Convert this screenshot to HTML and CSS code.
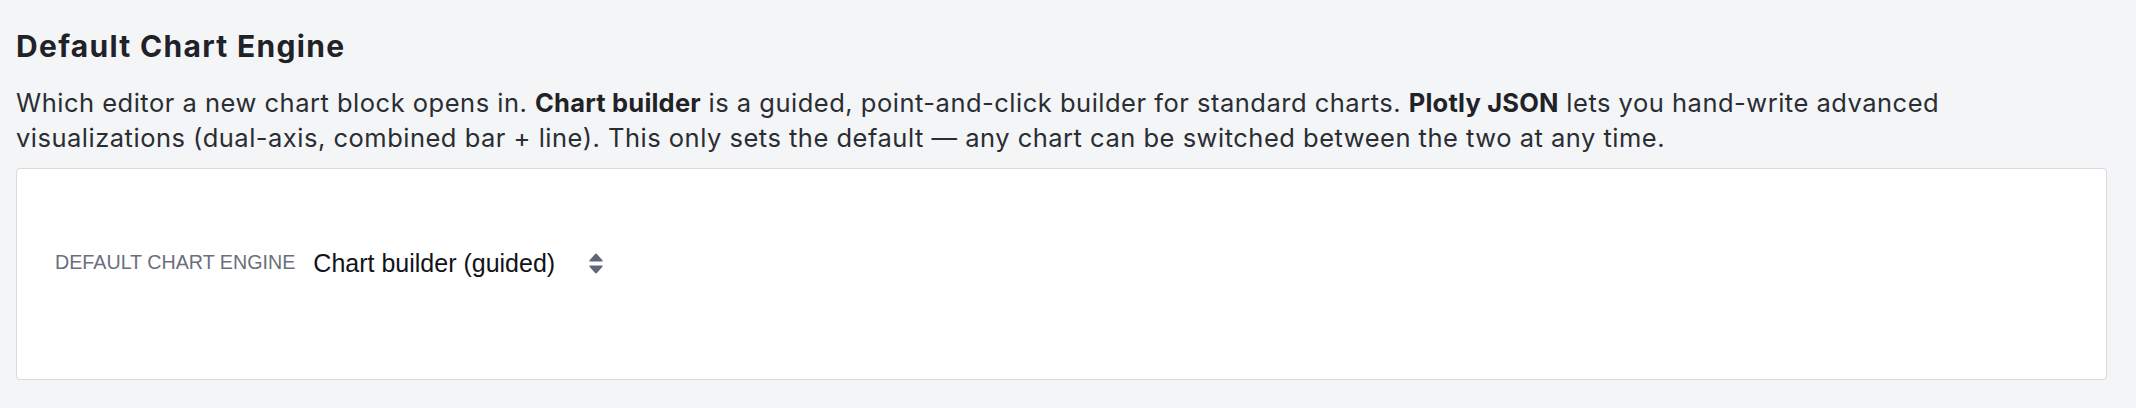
FILE: index.html
```html
<!DOCTYPE html>
<html lang="en">
<head>
<meta charset="utf-8">
<title>Default Chart Engine</title>
<link rel="stylesheet" href="styles.css">
</head>
<body>
<section class="setting">
  <h2 class="setting-title">Default Chart Engine</h2>
  <p class="setting-desc">Which editor a new chart block opens in. <strong>Chart builder</strong> is a guided, point-and-click builder for standard charts. <strong>Plotly JSON</strong> lets you hand-write advanced visualizations (dual-axis, combined bar + line). This only sets the default — any chart can be switched between the two at any time.</p>
  <div class="setting-card">
    <div class="field-row">
      <label class="field-label" for="engine">Default chart engine</label>
      <div class="select-wrap">
        <span class="select-value" id="engine">Chart builder (guided)</span>
        <svg class="select-icon" width="16" height="21" viewBox="0 0 16 21" aria-hidden="true">
          <path d="M6.9 1.2 Q8 0 9.1 1.2 L14.4 7.2 Q15.2 8.6 13.5 8.6 L2.5 8.6 Q0.8 8.6 1.6 7.2 Z" fill="#5f6677"/>
          <path d="M6.9 19.8 Q8 21 9.1 19.8 L14.4 13.8 Q15.2 12.4 13.5 12.4 L2.5 12.4 Q0.8 12.4 1.6 13.8 Z" fill="#5f6677"/>
        </svg>
      </div>
    </div>
  </div>
</section>
</body>
</html>
```

FILE: styles.css
```css
html, body {
  margin: 0;
  padding: 0;
  background: #f4f5f7;
}

body {
  font-family: Inter, "Noto Sans", sans-serif;
  color: #25282e;
}

.setting {
  padding: 26px 29px 0 16px;
}

.setting-title {
  margin: 0;
  font-size: 30px;
  line-height: 40px;
  font-weight: 700;
  color: #1f2227;
  letter-spacing: 1.3px;
}

.setting-desc {
  margin: 19px 0 0 0;
  font-size: 25.5px;
  line-height: 35px;
  letter-spacing: 0.5px;
  color: #2a2d33;
}

.setting-desc strong {
  font-weight: 700;
  letter-spacing: 0.2px;
  color: #1f2227;
}

.setting-card {
  margin-top: 13px;
  height: 210px;
  box-sizing: content-box;
  background: #ffffff;
  border: 1px solid #d8dadd;
  border-radius: 4px;
}

.field-row {
  display: flex;
  align-items: center;
  gap: 18px;
  padding: 80px 38px 0 38px;
}

.field-label {
  font-family: "Liberation Sans", Arial, sans-serif;
  font-size: 19.7px;
  text-transform: uppercase;
  color: #6a6f7b;
  margin-top: -2px;
}

.select-wrap {
  display: flex;
  align-items: center;
  gap: 33px;
}

.select-value {
  font-family: "Liberation Sans", Arial, sans-serif;
  font-size: 25px;
  line-height: 29px;
  color: #111318;
}

.select-icon {
  display: block;
}
```
